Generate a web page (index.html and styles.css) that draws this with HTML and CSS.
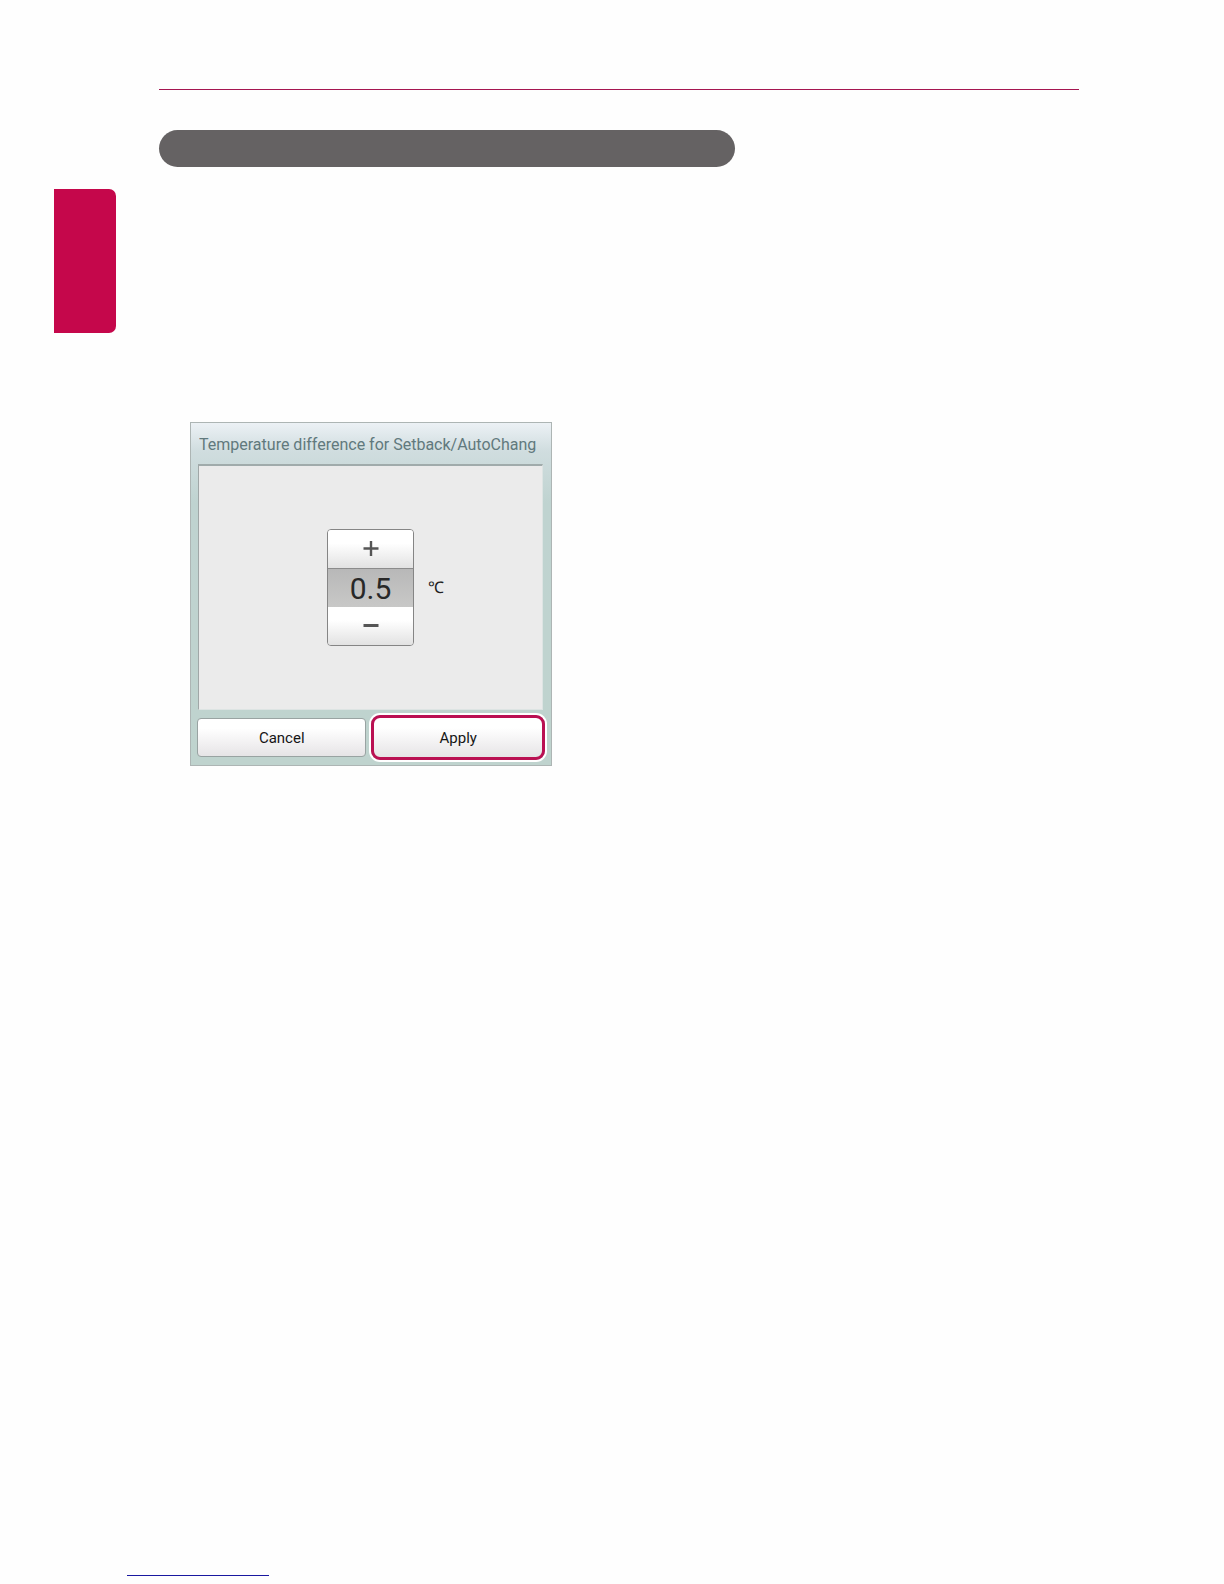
FILE: index.html
```
<!DOCTYPE html>
<html lang="en">
<head>
<meta charset="utf-8">
<meta name="viewport" content="width=device-width, initial-scale=1">
<title>Temperature difference</title>
<link rel="stylesheet" href="styles.css">
</head>
<body>
<div class="page">
  <aside class="side"><div class="side-tab"></div></aside>
  <main class="content">
    <hr class="rule">
    <div class="section-bar"></div>
    <form class="dialog">
      <h1 class="dialog-title">Temperature difference for Setback/AutoChang</h1>
      <div class="panel">
        <div class="stepper">
          <button type="button" class="step step-up" aria-label="Increase">
            <svg width="16" height="16" viewBox="0 0 16 16" aria-hidden="true"><path d="M8 0v15M0.5 7.5h15" stroke="#555" stroke-width="2.4" fill="none"/></svg>
          </button>
          <input class="value" id="difference" type="text" value="0.5" aria-label="Temperature difference">
          <button type="button" class="step step-down" aria-label="Decrease">
            <svg width="16" height="16" viewBox="0 0 16 16" aria-hidden="true"><path d="M0.5 7.5h15" stroke="#555" stroke-width="2.8" fill="none"/></svg>
          </button>
        </div>
        <label class="unit" for="difference">℃</label>
      </div>
      <div class="actions">
        <button type="button" class="action">Cancel</button>
        <button type="submit" class="action action-primary">Apply</button>
      </div>
    </form>
  </main>
</div>
<footer class="footer"><hr class="footer-rule"></footer>
</body>
</html>
```
FILE: styles.css
```
* { box-sizing: border-box; }
body {
  margin: 0;
  min-height: 100vh;
  display: flex;
  flex-direction: column;
  background: #fefefe;
  font-family: Roboto, "Liberation Sans", sans-serif;
}
.page {
  display: grid;
  grid-template-columns: 62px minmax(0, 1fr);
  column-gap: 43px;
  padding: 89px 145px 0 54px;
}
.side { padding-top: 100px; }
.side-tab {
  height: 144px;
  border-radius: 0 7px 7px 0;
  background: #c5074b;
}
.rule {
  height: 1px;
  margin: 0;
  border: 0;
  background: #a51550;
}
.section-bar {
  max-width: 576px;
  height: 37px;
  margin-top: 40px;
  border-radius: 19px;
  background: #656263;
}
.dialog {
  max-width: 362px;
  margin: 255px 0 0 31px;
  padding: 0 6px 5px;
  border: 1px solid #adb5b4;
  background: linear-gradient(#ecf1f5 0, #d0dddf 28px, #bfd3d0 80px, #bfd3ce 100%);
}
.dialog-title {
  height: 41px;
  margin: 0 2px;
  overflow: hidden;
  white-space: nowrap;
  font-size: 16px;
  font-weight: 400;
  line-height: 43px;
  color: #61797d;
}
.panel {
  display: grid;
  grid-template-columns: 1fr 87px 1fr;
  align-items: center;
  height: 246px;
  margin: 0 2px 0 1px;
  border: 1px solid #dde4e3;
  border-top: 2px solid #a0abab;
  border-left-color: #a0a7a7;
  background: #ebebeb;
}
.stepper {
  grid-column: 2;
  display: flex;
  flex-direction: column;
  border: 1px solid #858585;
  border-radius: 4px;
  overflow: hidden;
}
.step {
  display: flex;
  align-items: center;
  justify-content: center;
  height: 38px;
  padding: 0;
  border: 0;
  background: linear-gradient(#fff 35%, #e2e2e2);
}
.value {
  width: 100%;
  height: 39px;
  padding: 0;
  border: 0;
  border-top: 1px solid #8c8c8c;
  border-radius: 0;
  background: linear-gradient(#b8b8b8, #c8c8c7);
  font: 400 30px Roboto, "Liberation Sans", sans-serif;
  text-align: center;
  color: #282828;
}
.unit {
  padding-left: 14px;
  font-size: 16px;
  line-height: 20px;
  color: #222;
}
.actions {
  display: grid;
  grid-template-columns: 169fr 173fr;
  align-items: center;
  gap: 5px;
  margin-top: 5px;
}
.action {
  height: 39px;
  padding: 0;
  border: 1px solid #99a3a2;
  border-radius: 4px;
  background: linear-gradient(#fff 25%, #e6e4e6);
  font: 400 15px Roboto, "Liberation Sans", sans-serif;
  color: #151515;
}
.action-primary {
  height: 45px;
  border: 3px solid #ba1052;
  border-radius: 9px;
  box-shadow: 0 0 0 2px #fff;
}
.footer {
  margin-top: auto;
  padding: 0 127px 8px;
}
.footer-rule {
  width: 142px;
  height: 1px;
  margin: 0;
  border: 0;
  background: #1a18a0;
}
```
